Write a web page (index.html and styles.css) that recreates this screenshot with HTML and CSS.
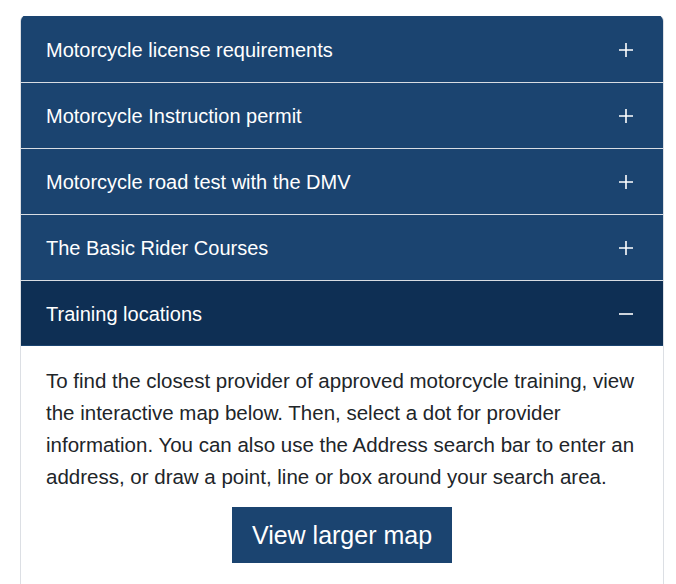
FILE: index.html
```html
<!DOCTYPE html>
<html lang="en">
<head>
<meta charset="utf-8">
<title>Motorcycle</title>
<link rel="stylesheet" href="styles.css">
</head>
<body>
<div class="wrap">
  <div class="accordion">
    <div class="acc-header first">
      <span>Motorcycle license requirements</span>
      <svg class="ico" viewBox="0 0 14 14"><path d="M7 0v14M0 7h14"/></svg>
    </div>
    <div class="acc-header">
      <span>Motorcycle Instruction permit</span>
      <svg class="ico" viewBox="0 0 14 14"><path d="M7 0v14M0 7h14"/></svg>
    </div>
    <div class="acc-header">
      <span>Motorcycle road test with the DMV</span>
      <svg class="ico" viewBox="0 0 14 14"><path d="M7 0v14M0 7h14"/></svg>
    </div>
    <div class="acc-header">
      <span>The Basic Rider Courses</span>
      <svg class="ico" viewBox="0 0 14 14"><path d="M7 0v14M0 7h14"/></svg>
    </div>
    <div class="acc-header active">
      <span>Training locations</span>
      <svg class="ico" viewBox="0 0 14 14"><path d="M0 7h14"/></svg>
    </div>
    <div class="acc-body">
      <p>To find the closest provider of approved motorcycle training, view the interactive map below. Then, select a dot for provider information. You can also use the Address search bar to enter an address, or draw a point, line or box around your search area.</p>
      <div class="btn-row"><a class="btn" href="#">View larger map</a></div>
    </div>
  </div>
</div>
</body>
</html>
```
FILE: styles.css
```css
html, body {
  margin: 0;
  padding: 0;
  background: #fff;
}
body {
  font-family: "Liberation Sans", Arial, sans-serif;
  color: #212529;
}
.wrap {
  padding: 16px 12px 0 20px;
}
.accordion {
  border: 1px solid #dcdfe4;
  border-top: none;
  border-radius: 5px 5px 0 0;
  overflow: hidden;
}
.acc-header {
  display: flex;
  align-items: center;
  justify-content: space-between;
  height: 65px;
  padding: 2px 30px 0 25px;
  box-sizing: border-box;
  height: 66px;
  background: #1b4470;
  color: #fff;
  font-size: 20px;
  border-top: 1px solid #d8dde3;
}
.acc-header .ico {
  margin-top: -2px;
}
.acc-header.first {
  border-top: 1px solid #1b4470;
}
.acc-header.active {
  background: #0e2f54;
  box-shadow: inset 0 -1px 0 #1b4470;
}
.ico {
  width: 14px;
  height: 14px;
  fill: none;
  stroke: #fff;
  stroke-width: 1.6;
}
.acc-body {
  padding: 19px 25px 60px 25px;
}
.acc-body p {
  margin: 0;
  font-size: 20.5px;
  line-height: 32px;
}
.btn-row {
  display: flex;
  justify-content: center;
  margin-top: 14px;
}
.btn {
  display: flex;
  align-items: center;
  justify-content: center;
  height: 56px;
  padding: 0 20px;
  background: #1b4470;
  color: #fff;
  font-size: 25px;
  text-decoration: none;
}
```
